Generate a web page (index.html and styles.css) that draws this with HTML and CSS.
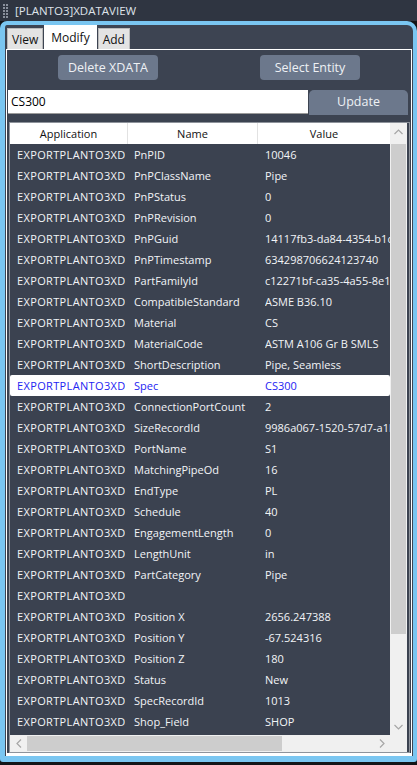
FILE: index.html
```html
<!DOCTYPE html>
<html>
<head>
<meta charset="utf-8">
<link rel="stylesheet" href="styles.css">
</head>
<body>
<div class="titlebar">
  <svg class="grip" width="6" height="14" viewBox="0 0 6 14">
    <g fill="#8a909c">
      <rect x="0" y="0" width="2" height="2"/><rect x="3" y="0" width="2" height="2"/>
      <rect x="0" y="3" width="2" height="2"/><rect x="3" y="3" width="2" height="2"/>
      <rect x="0" y="6" width="2" height="2"/><rect x="3" y="6" width="2" height="2"/>
      <rect x="0" y="9" width="2" height="2"/><rect x="3" y="9" width="2" height="2"/>
      <rect x="0" y="12" width="2" height="2"/><rect x="3" y="12" width="2" height="2"/>
    </g>
  </svg>
  <span class="title">[PLANTO3]XDATAVIEW</span>
</div>
<div class="panel">
  <div class="tabs">
    <div class="tab">View</div>
    <div class="tab active">Modify</div>
    <div class="tab">Add</div>
  </div>
  <div class="tabpage">
    <div class="btnrow">
      <button class="btn">Delete XDATA</button>
      <button class="btn">Select Entity</button>
    </div>
    <div class="editrow">
      <div class="input">CS300</div>
      <button class="update">Update</button>
    </div>
    <div class="grid">
      <div class="data">
        <div class="row head">
          <div class="c c1"><span>Application</span></div>
          <div class="c c2"><span>Name</span></div>
          <div class="c c3"><span>Value</span></div>
        </div>
        <div class="rows">
          <div class="row"><div class="c c1"><span>EXPORTPLANTO3XDATA</span></div><div class="c c2"><span>PnPID</span></div><div class="c c3"><span>10046</span></div></div>
          <div class="row"><div class="c c1"><span>EXPORTPLANTO3XDATA</span></div><div class="c c2"><span>PnPClassName</span></div><div class="c c3"><span>Pipe</span></div></div>
          <div class="row"><div class="c c1"><span>EXPORTPLANTO3XDATA</span></div><div class="c c2"><span>PnPStatus</span></div><div class="c c3"><span>0</span></div></div>
          <div class="row"><div class="c c1"><span>EXPORTPLANTO3XDATA</span></div><div class="c c2"><span>PnPRevision</span></div><div class="c c3"><span>0</span></div></div>
          <div class="row"><div class="c c1"><span>EXPORTPLANTO3XDATA</span></div><div class="c c2"><span>PnPGuid</span></div><div class="c c3"><span>14117fb3-da84-4354-b1c2</span></div></div>
          <div class="row"><div class="c c1"><span>EXPORTPLANTO3XDATA</span></div><div class="c c2"><span>PnPTimestamp</span></div><div class="c c3"><span>634298706624123740</span></div></div>
          <div class="row"><div class="c c1"><span>EXPORTPLANTO3XDATA</span></div><div class="c c2"><span>PartFamilyId</span></div><div class="c c3"><span>c12271bf-ca35-4a55-8e1f</span></div></div>
          <div class="row"><div class="c c1"><span>EXPORTPLANTO3XDATA</span></div><div class="c c2"><span>CompatibleStandard</span></div><div class="c c3"><span>ASME B36.10</span></div></div>
          <div class="row"><div class="c c1"><span>EXPORTPLANTO3XDATA</span></div><div class="c c2"><span>Material</span></div><div class="c c3"><span>CS</span></div></div>
          <div class="row"><div class="c c1"><span>EXPORTPLANTO3XDATA</span></div><div class="c c2"><span>MaterialCode</span></div><div class="c c3"><span>ASTM A106 Gr B SMLS</span></div></div>
          <div class="row"><div class="c c1"><span>EXPORTPLANTO3XDATA</span></div><div class="c c2"><span>ShortDescription</span></div><div class="c c3"><span>Pipe, Seamless</span></div></div>
          <div class="row sel"><div class="c c1"><span>EXPORTPLANTO3XDATA</span></div><div class="c c2"><span>Spec</span></div><div class="c c3"><span>CS300</span></div></div>
          <div class="row"><div class="c c1"><span>EXPORTPLANTO3XDATA</span></div><div class="c c2"><span>ConnectionPortCount</span></div><div class="c c3"><span>2</span></div></div>
          <div class="row"><div class="c c1"><span>EXPORTPLANTO3XDATA</span></div><div class="c c2"><span>SizeRecordId</span></div><div class="c c3"><span>9986a067-1520-57d7-a1b2</span></div></div>
          <div class="row"><div class="c c1"><span>EXPORTPLANTO3XDATA</span></div><div class="c c2"><span>PortName</span></div><div class="c c3"><span>S1</span></div></div>
          <div class="row"><div class="c c1"><span>EXPORTPLANTO3XDATA</span></div><div class="c c2"><span>MatchingPipeOd</span></div><div class="c c3"><span>16</span></div></div>
          <div class="row"><div class="c c1"><span>EXPORTPLANTO3XDATA</span></div><div class="c c2"><span>EndType</span></div><div class="c c3"><span>PL</span></div></div>
          <div class="row"><div class="c c1"><span>EXPORTPLANTO3XDATA</span></div><div class="c c2"><span>Schedule</span></div><div class="c c3"><span>40</span></div></div>
          <div class="row"><div class="c c1"><span>EXPORTPLANTO3XDATA</span></div><div class="c c2"><span>EngagementLength</span></div><div class="c c3"><span>0</span></div></div>
          <div class="row"><div class="c c1"><span>EXPORTPLANTO3XDATA</span></div><div class="c c2"><span>LengthUnit</span></div><div class="c c3"><span>in</span></div></div>
          <div class="row"><div class="c c1"><span>EXPORTPLANTO3XDATA</span></div><div class="c c2"><span>PartCategory</span></div><div class="c c3"><span>Pipe</span></div></div>
          <div class="row"><div class="c c1"><span>EXPORTPLANTO3XDATA</span></div><div class="c c2"><span></span></div><div class="c c3"><span></span></div></div>
          <div class="row"><div class="c c1"><span>EXPORTPLANTO3XDATA</span></div><div class="c c2"><span>Position X</span></div><div class="c c3"><span>2656.247388</span></div></div>
          <div class="row"><div class="c c1"><span>EXPORTPLANTO3XDATA</span></div><div class="c c2"><span>Position Y</span></div><div class="c c3"><span>-67.524316</span></div></div>
          <div class="row"><div class="c c1"><span>EXPORTPLANTO3XDATA</span></div><div class="c c2"><span>Position Z</span></div><div class="c c3"><span>180</span></div></div>
          <div class="row"><div class="c c1"><span>EXPORTPLANTO3XDATA</span></div><div class="c c2"><span>Status</span></div><div class="c c3"><span>New</span></div></div>
          <div class="row"><div class="c c1"><span>EXPORTPLANTO3XDATA</span></div><div class="c c2"><span>SpecRecordId</span></div><div class="c c3"><span>1013</span></div></div>
          <div class="row"><div class="c c1"><span>EXPORTPLANTO3XDATA</span></div><div class="c c2"><span>Shop_Field</span></div><div class="c c3"><span>SHOP</span></div></div>
        </div>
      </div>
      <div class="vscroll">
        <div class="arrow"><svg width="9" height="6" viewBox="0 0 9 6"><polyline points="0.5,5 4.5,1 8.5,5" fill="none" stroke="#a6a6a6" stroke-width="1.2"/></svg></div>
        <div class="vthumb"></div>
        <div class="vtrack"></div>
        <div class="arrow"><svg width="9" height="6" viewBox="0 0 9 6"><polyline points="0.5,1 4.5,5 8.5,1" fill="none" stroke="#a6a6a6" stroke-width="1.2"/></svg></div>
      </div>
      <div class="hscroll">
        <div class="harrow"><svg width="6" height="9" viewBox="0 0 6 9"><polyline points="5,0.5 1,4.5 5,8.5" fill="none" stroke="#a6a6a6" stroke-width="1.2"/></svg></div>
        <div class="hthumb"></div>
        <div class="htrack"></div>
        <div class="harrow"><svg width="6" height="9" viewBox="0 0 6 9"><polyline points="1,0.5 5,4.5 1,8.5" fill="none" stroke="#a6a6a6" stroke-width="1.2"/></svg></div>
      </div>
      <div class="corner"></div>
    </div>
  </div>
</div>
</body>
</html>
```

FILE: styles.css
```css
* { box-sizing: border-box; }
html, body {
  margin: 0;
  padding: 0;
  background: #141518;
  width: 417px;
  height: 765px;
  overflow: hidden;
  font-family: "Open Sans", "Noto Sans", sans-serif;
}
.titlebar {
  height: 21px;
  background: #2f3541;
  display: flex;
  align-items: center;
  padding-left: 3px;
  gap: 6px;
}
.grip { display: block; }
.title {
  color: #dfe3ea;
  font-size: 11.5px;
}
.panel {
  height: 741px;
  background: #3d4452;
  border: 4px solid #7ac6f1;
  border-left-width: 5px;
  border-bottom-width: 6px;
  border-radius: 7px 10px 3px 3px;
  padding: 0 1px;
  display: flex;
  flex-direction: column;
}
.tabs {
  height: 24px;
  display: flex;
  align-items: flex-end;
  padding-left: 1px;
}
.tab {
  height: 21px;
  background: #e3e3e3;
  border: 1px solid #b9b9b9;
  border-bottom: none;
  color: #111;
  font-size: 12px;
  padding: 0 4px;
  display: flex;
  align-items: center;
}
.tab.active {
  height: 24px;
  background: #fff;
  border-color: #fff;
  padding: 0 6px;
  margin: 0 1px;
}
.tabpage {
  flex: 1;
  border: 1px solid #fff;
  border-bottom-width: 3px;
  background: #3c4351;
  display: flex;
  flex-direction: column;
  padding-top: 5px;
}
.btnrow {
  display: grid;
  grid-template-columns: 1fr 1fr;
  justify-items: center;
  height: 25px;
}
.btn, .update {
  font-family: inherit;
  font-size: 12.5px;
  color: #eef1f5;
  background: #6c788c;
  border: none;
  border-radius: 4px;
  width: 100px;
  height: 25px;
  padding: 0;
}
.editrow {
  margin-top: 10px;
  display: flex;
  height: 25px;
  padding-left: 1px;
}
.input {
  width: 300px;
  height: 24px;
  background: #fff;
  border-bottom: 1px solid #9a9a9a;
  color: #000;
  font-size: 12px;
  padding-left: 3px;
  display: flex;
  align-items: center;
}
.update {
  width: 99px;
  margin-left: 1px;
  border-radius: 5px 5px 0 0;
  padding-bottom: 3px;
}
.grid {
  margin: 7px 1px 0 2px;
  height: 631px;
  border: 1px solid #8e939b;
  display: grid;
  grid-template-columns: 380px 17px;
  grid-template-rows: 612px 17px;
  background: #3b4250;
}
.data {
  overflow: hidden;
  display: flex;
  flex-direction: column;
}
.row {
  display: flex;
  height: 21px;
  flex: none;
  color: #f2f4f7;
  font-size: 11px;
}
.c {
  display: flex;
  align-items: center;
  padding: 0 4px 0 7px;
  overflow: hidden;
  white-space: nowrap;
}
.c span { display: block; overflow: hidden; width: 100%; }
.c1 { width: 118px; padding-right: 3px; }
.c1 span { letter-spacing: 0.35px; }
.c2 { width: 130px; padding-left: 6px; }
.c3 { width: 132px; padding-left: 7px; padding-right: 0; }
.head { background: #fff; color: #111; }
.head .c { justify-content: center; border-right: 1px solid #e2e2e2; padding: 0; text-align: center; }
.head .c1 span { letter-spacing: 0; }
.head .c3 { border-right: none; }
.rows { display: flex; flex-direction: column; }
.row.sel { background: #fff; color: #2424f2; border-radius: 2px; }
.vscroll {
  display: flex;
  flex-direction: column;
  background: #f0f0f0;
}
.arrow {
  height: 17px;
  flex: none;
  display: flex;
  align-items: center;
  justify-content: center;
}
.vthumb { height: 490px; background: #cdcdcd; margin: 4px 1px 0 1px; }
.vtrack { flex: 1; }
.hscroll {
  display: flex;
  background: #f0f0f0;
}
.harrow {
  width: 17px;
  flex: none;
  display: flex;
  align-items: center;
  justify-content: center;
}
.hthumb { width: 255px; background: #cdcdcd; margin: 1px 0; }
.htrack { flex: 1; }
.corner { background: #f0f0f0; }
```
